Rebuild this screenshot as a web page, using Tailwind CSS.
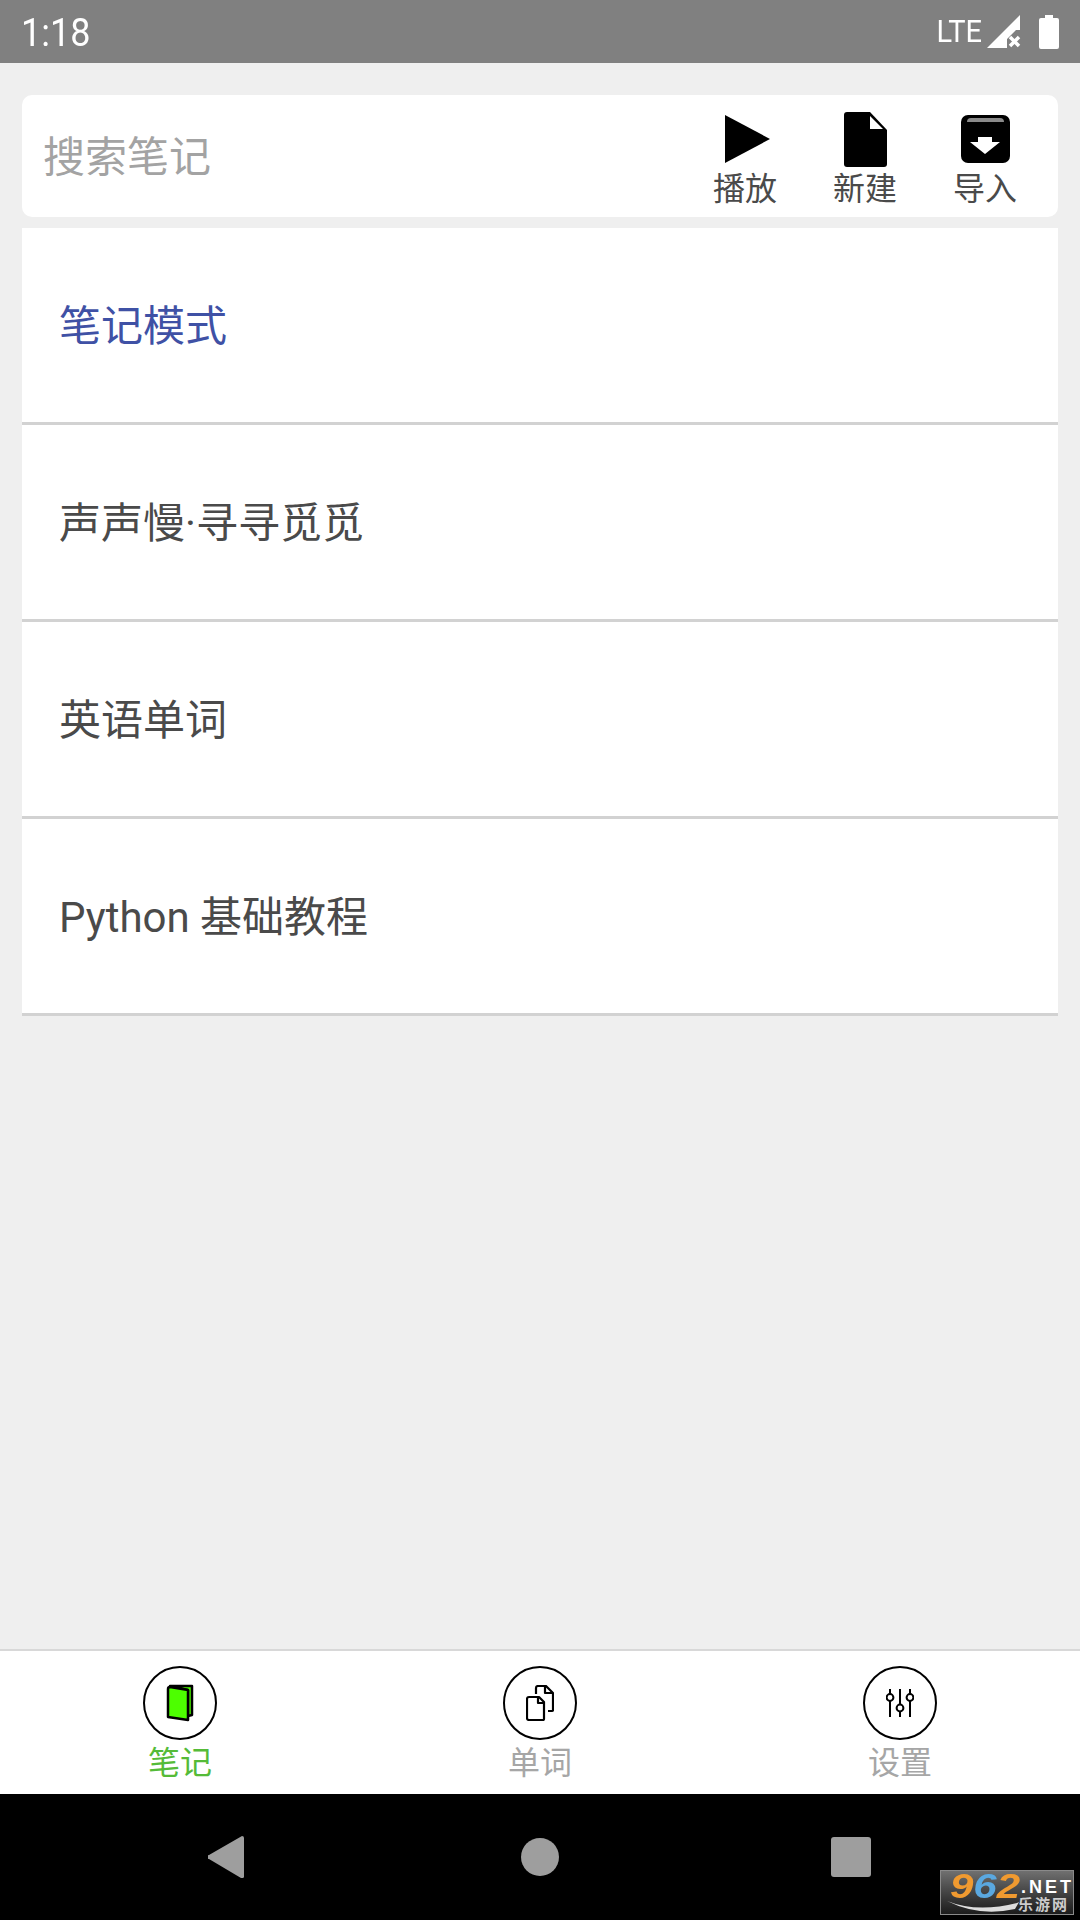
<!DOCTYPE html>
<html lang="zh-CN">
<head>
  <meta charset="UTF-8" />
  <meta name="viewport" content="width=device-width, initial-scale=1.0"/>
  <title>笔记</title>
  <script src="https://cdn.jsdelivr.net/npm/@tailwindcss/browser@4"></script>
</head>
<body class="bg-[#efefef] font-['Roboto','Noto_Sans_CJK_SC',sans-serif]">
<div class="relative w-[1080px] h-[1920px] flex flex-col overflow-hidden">

  <!-- Status bar -->
  <div class="h-[63px] bg-[#808080] flex items-center justify-between pl-[21px] pr-[21px] text-white">
    <span class="text-[36px] leading-none scale-y-[1.08] mt-[3px]">1:18</span>
    <div class="flex items-center">
      <span class="text-[29px] leading-none scale-y-[1.1] mr-[5px]">LTE</span>
      <svg class="w-[34px] h-[34px] mr-[18px]" viewBox="0 0 34 34"><path fill="#fff" d="M0 33 33 0v15h-4l-9 9v9z"/><path stroke="#fff" stroke-width="3.5" fill="none" d="M23 20l9 9M32 20l-9 9" transform="translate(0 2)"/></svg>
      <svg class="w-[20px] h-[34px]" viewBox="0 0 20 34"><path fill="#fff" d="M6 0h8v3h4a2 2 0 0 1 2 2v27a2 2 0 0 1-2 2H2a2 2 0 0 1-2-2V5a2 2 0 0 1 2-2h4z"/></svg>
    </div>
  </div>

  <!-- Search and actions -->
  <div class="mx-[22px] mt-[32px] h-[122px] bg-white rounded-[10px] flex justify-between pl-[21px] pr-[41px]">
    <span class="text-[42px] text-[#a3a3a3] leading-none mt-[42px]">搜索笔记</span>
    <div class="flex gap-[56px] pt-[17px] text-[32px] leading-none text-[#4a4a4a]">
      <div class="w-[64px] flex flex-col items-center">
        <svg class="w-[64px] h-[56px] mb-[5px]" viewBox="0 0 64 56"><path class="blur-[0.6px]" d="M12 3 57 27 12 51z"/></svg>
        <span>播放</span>
      </div>
      <div class="w-[64px] flex flex-col items-center">
        <svg class="w-[64px] h-[56px] mb-[5px]" viewBox="0 0 64 56"><path d="M14 0h23l17 18v34a3 3 0 0 1-3 3H14a3 3 0 0 1-3-3V3a3 3 0 0 1 3-3z"/><path fill="#fff" d="M37 4v13h13z"/></svg>
        <span>新建</span>
      </div>
      <div class="w-[64px] flex flex-col items-center">
        <svg class="w-[64px] h-[56px] mb-[5px]" viewBox="0 0 64 56"><path d="M15 3h35a7 7 0 0 1 7 7v34a7 7 0 0 1-7 7H15a7 7 0 0 1-7-7V10a7 7 0 0 1 7-7z"/><path fill="#8a8a8a" d="M14 10q0-4 4-4h29q4 0 4 4z"/><path fill="#fff" d="M25 25h14v5h8L32 42 17 30h8z"/></svg>
        <span>导入</span>
      </div>
    </div>
  </div>

  <!-- Notes -->
  <div class="mx-[22px] mt-[11px] bg-white text-[42px] text-[#4a4a4a]">
    <div class="h-[197px] border-b-[3px] border-[#d2d2d2] flex items-center pl-[37px] pt-[2px] text-[#3f51a5]">笔记模式</div>
    <div class="h-[197px] border-b-[3px] border-[#d2d2d2] flex items-center pl-[37px] pt-[2px]">声声慢·寻寻觅觅</div>
    <div class="h-[197px] border-b-[3px] border-[#d2d2d2] flex items-center pl-[37px] pt-[2px]">英语单词</div>
    <div class="h-[197px] border-b-[3px] border-[#d2d2d2] flex items-center pl-[37px] pt-[2px]">Python 基础教程</div>
  </div>

  <!-- Bottom tabs -->
  <div class="mt-auto h-[145px] bg-white border-t-2 border-[#d8d8d8] grid grid-cols-3 text-[32px] leading-none text-[#a6a6a6]">
    <div class="flex flex-col items-center pt-[15px]">
      <div class="w-[74px] h-[74px] rounded-full border-[2.5px] border-black flex items-center justify-center">
        <svg class="w-[28px] h-[38px]" viewBox="0 0 28 38"><path fill="#4dff00" stroke="#000" stroke-width="2.5" stroke-linejoin="round" d="M4 2h22v29l-4 1V6z"/><path fill="#4dff00" stroke="#000" stroke-width="2.5" stroke-linejoin="round" d="M2 5q0-2 2-2l18 3v30L2 33z"/></svg>
      </div>
      <span class="mt-[7px] text-[#55bb38]">笔记</span>
    </div>
    <div class="flex flex-col items-center pt-[15px]">
      <div class="w-[74px] h-[74px] rounded-full border-[2.5px] border-black flex items-center justify-center">
        <svg class="w-[28px] h-[36px]" viewBox="0 0 28 36" fill="none" stroke="#000" stroke-width="2.2" stroke-linejoin="round"><path d="M1 14q0-2 2-2h10l5 5v17q0 1-1 1H3q-2 0-2-2z"/><path d="M12 12v6h6"/><path d="M10 9V3q0-2 2-2h8l7 7v17q0 1-1 1h-4"/><path d="M19 1v7h8"/></svg>
      </div>
      <span class="mt-[7px]">单词</span>
    </div>
    <div class="flex flex-col items-center pt-[15px]">
      <div class="w-[74px] h-[74px] rounded-full border-[2.5px] border-black flex items-center justify-center">
        <svg class="w-[28px] h-[28px]" viewBox="0 0 28 28" fill="none" stroke="#000" stroke-width="2"><path d="M4 0v5M4 12v16M14 0v15M14 23v5M24 0v5M24 12v16"/><circle cx="4" cy="8.5" r="3.4"/><circle cx="14" cy="19" r="3.4"/><circle cx="24" cy="8.5" r="3.4"/></svg>
      </div>
      <span class="mt-[7px]">设置</span>
    </div>
  </div>

  <!-- Android nav bar -->
  <div class="h-[126px] bg-black flex items-center">
    <div class="flex-1 flex justify-center">
      <svg class="w-[36px] h-[42px] ml-[-70px]" viewBox="0 0 36 42"><path fill="#9e9e9e" d="M34 0a2 2 0 0 1 2 2v38a2 2 0 0 1-3 2L1 23a2 2 0 0 1 0-4z"/></svg>
    </div>
    <div class="w-[38px] h-[38px] rounded-full bg-[#9e9e9e]"></div>
    <div class="flex-1 flex justify-center">
      <div class="w-[40px] h-[40px] rounded-[3px] bg-[#9e9e9e] ml-[62px]"></div>
    </div>
  </div>

  <!-- Watermark -->
  <div class="absolute left-[940px] top-[1870px] w-[134px] h-[45px] border border-[#8a8a8a] bg-gradient-to-b from-[#707070] to-[#1c1c1c]">
    <span class="absolute left-[9px] top-[-2px] inline-block origin-left scale-x-[1.2] text-[35px] leading-[34px] font-bold italic font-['Liberation_Sans'] text-[#f09a30]">9<span class="text-[#5aa8e0]">6</span>2</span>
    <svg class="absolute left-[6px] top-[28px] w-[72px] h-[14px]" viewBox="0 0 72 14"><path fill="#ddd" d="M0 2q30 12 70 2l2-1-4 7q-36 8-68-8z"/></svg>
    <span class="absolute left-[80px] top-[6px] text-[18px] leading-[20px] font-bold font-['Liberation_Sans'] tracking-[3px] text-white">.NET</span>
    <span class="absolute left-[77px] top-[26px] text-[15px] leading-[16px] font-bold text-[#ccc] tracking-[2px]">乐游网</span>
  </div>
</div>
</body>
</html>
